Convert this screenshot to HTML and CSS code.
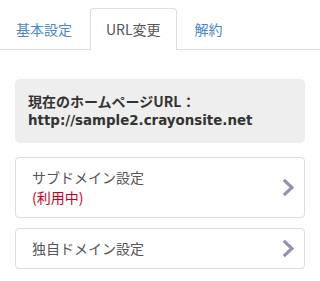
FILE: index.html
```html
<!DOCTYPE html>
<html lang="ja">
<head>
<meta charset="utf-8">
<link rel="stylesheet" href="styles.css">
</head>
<body>
<ul class="tabs">
  <li class="tab"><a href="#">基本設定</a></li>
  <li class="tab active"><a href="#">URL変更</a></li>
  <li class="tab"><a href="#">解約</a></li>
</ul>
<div class="content">
  <div class="current">
    <div>現在のホームページURL：</div>
    <div class="url">http://sample2.crayonsite.net</div>
  </div>
  <a class="card" href="#">
    <span class="card-text">サブドメイン設定<br><span class="inuse">(利用中)</span></span>
    <svg class="chev" width="12" height="19" viewBox="0 0 12 19"><polyline points="1.8,1.8 10,9.5 1.8,17.2" fill="none" stroke="#9591ab" stroke-width="3.2"/></svg>
  </a>
  <a class="card" href="#">
    <span class="card-text">独自ドメイン設定</span>
    <svg class="chev" width="12" height="19" viewBox="0 0 12 19"><polyline points="1.8,1.8 10,9.5 1.8,17.2" fill="none" stroke="#9591ab" stroke-width="3.2"/></svg>
  </a>
</div>
</body>
</html>
```

FILE: styles.css
```css
html, body {
  margin: 0;
  padding: 0;
  background: #fff;
}
body {
  font-family: "Noto Sans CJK JP", "Noto Sans", sans-serif;
  font-size: 14px;
  line-height: 20px;
  color: #555;
}
.tabs {
  list-style: none;
  margin: 0;
  padding: 8px 0 0 0;
  display: flex;
  border-bottom: 1px solid #ddd;
}
.tab {
  margin-right: 2px;
  margin-bottom: -1px;
}
.tab a {
  display: block;
  padding: 10px 15px;
  border: 1px solid transparent;
  border-bottom: none;
  border-radius: 4px 4px 0 0;
  color: #4a87c6;
  text-decoration: none;
  height: 20px;
}
.tab.active a {
  border-color: #ddd;
  background: #fff;
  color: #555;
  padding-bottom: 11px;
}
.content {
  padding: 29px 15px 0 15px;
}
.current {
  background: #eee;
  border-radius: 5px;
  padding: 12px 13px;
  font-weight: bold;
  color: #333;
  margin-bottom: 14px;
}
.url {
  font-family: "DejaVu Sans", "Noto Sans CJK JP", sans-serif;
  font-size: 13.4px;
}
.card {
  display: flex;
  align-items: center;
  justify-content: space-between;
  border: 1px solid #ddd;
  border-radius: 4px;
  padding: 9px 10px 10px 16px;
  margin-bottom: 10px;
  color: #555;
  text-decoration: none;
}
.inuse {
  color: #c8001e;
}
.chev {
  display: block;
  flex: none;
}
```
